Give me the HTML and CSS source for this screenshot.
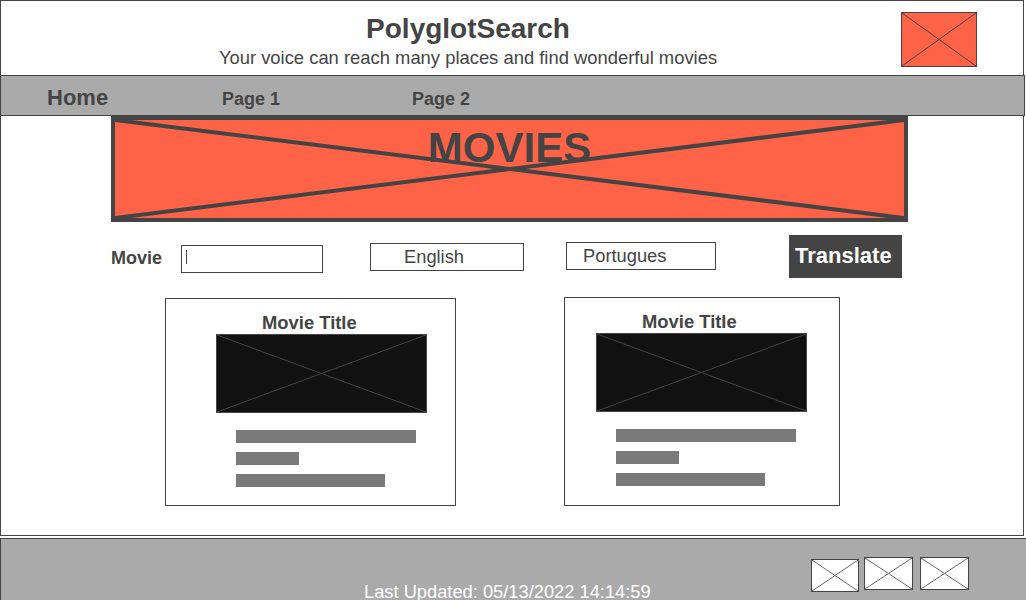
FILE: index.html
```html
<!DOCTYPE html>
<html lang="en">
<head>
<meta charset="utf-8">
<title>PolyglotSearch</title>
<link rel="stylesheet" href="styles.css">
</head>
<body>
<div class="page">
  <header class="header">
    <div class="brand">
      <h1 class="brand-title">PolyglotSearch</h1>
      <p class="brand-sub">Your voice can reach many places and find wonderful movies</p>
    </div>
    <div class="logo">
      <svg class="xsvg" viewBox="0 0 100 100" preserveAspectRatio="none"><line x1="0" y1="0" x2="100" y2="100"/><line x1="100" y1="0" x2="0" y2="100"/></svg>
    </div>
  </header>
  <nav class="nav">
    <a class="nav-home">Home</a>
    <a class="nav-link nav-p1">Page 1</a>
    <a class="nav-link">Page 2</a>
  </nav>
  <section class="banner">
    <svg class="banner-x" viewBox="0 0 100 100" preserveAspectRatio="none"><line x1="0" y1="0" x2="100" y2="100"/><line x1="100" y1="0" x2="0" y2="100"/></svg>
    <div class="banner-title">MOVIES</div>
  </section>
  <div class="form-row">
    <label class="movie-label">Movie</label>
    <div class="movie-input"><span class="caret"></span></div>
    <div class="lang lang-en">English</div>
    <div class="lang lang-pt">Portugues</div>
    <div class="translate">Translate</div>
  </div>
  <div class="cards">
    <div class="card card-a">
      <div class="card-title">Movie Title</div>
      <div class="thumb">
        <svg class="thumb-x" viewBox="0 0 100 100" preserveAspectRatio="none"><line x1="0" y1="0" x2="100" y2="100"/><line x1="100" y1="0" x2="0" y2="100"/></svg>
      </div>
      <div class="bars">
        <div class="bar" style="width:180px"></div>
        <div class="bar" style="width:63px"></div>
        <div class="bar" style="width:149px"></div>
      </div>
    </div>
    <div class="card card-b">
      <div class="card-title">Movie Title</div>
      <div class="thumb">
        <svg class="thumb-x" viewBox="0 0 100 100" preserveAspectRatio="none"><line x1="0" y1="0" x2="100" y2="100"/><line x1="100" y1="0" x2="0" y2="100"/></svg>
      </div>
      <div class="bars">
        <div class="bar" style="width:180px"></div>
        <div class="bar" style="width:63px"></div>
        <div class="bar" style="width:149px"></div>
      </div>
    </div>
  </div>
</div>
<footer class="footer">
  <div class="updated">Last Updated: 05/13/2022 14:14:59</div>
  <div class="ficon ficon-1"><svg class="ficon-x" viewBox="0 0 100 100" preserveAspectRatio="none"><line x1="0" y1="0" x2="100" y2="100"/><line x1="100" y1="0" x2="0" y2="100"/></svg></div>
  <div class="ficon ficon-2"><svg class="ficon-x" viewBox="0 0 100 100" preserveAspectRatio="none"><line x1="0" y1="0" x2="100" y2="100"/><line x1="100" y1="0" x2="0" y2="100"/></svg></div>
  <div class="ficon ficon-3"><svg class="ficon-x" viewBox="0 0 100 100" preserveAspectRatio="none"><line x1="0" y1="0" x2="100" y2="100"/><line x1="100" y1="0" x2="0" y2="100"/></svg></div>
</footer>
</body>
</html>
```

FILE: styles.css
```css
* { box-sizing: border-box; }

html, body {
  margin: 0;
  padding: 0;
  background: #ffffff;
  overflow: hidden;
}

body {
  font-family: "Liberation Sans", Arial, sans-serif;
  color: #444444;
  width: 1026px;
  height: 600px;
}

.page {
  width: 1024px;
  height: 536px;
  border: 1px solid #444444;
}

/* header */
.header {
  display: flex;
  align-items: flex-start;
  height: 74px;
}

.brand {
  margin-left: 37px;
  width: 860px;
  padding-top: 12px;
  text-align: center;
}

.brand-title {
  margin: 0;
  font-size: 28px;
  line-height: 32px;
  font-weight: bold;
}

.brand-sub {
  margin: 2px 0 0;
  font-size: 18.4px;
  line-height: 21px;
}

.logo {
  margin-left: 3px;
  margin-top: 11px;
  width: 76px;
  height: 55px;
  border: 1px solid #444444;
  background: #ff6347;
}

.xsvg, .thumb-x, .ficon-x {
  display: block;
  width: 100%;
  height: 100%;
}

.xsvg line, .thumb-x line, .ficon-x line {
  stroke: #444444;
  stroke-width: 1px;
  vector-effect: non-scaling-stroke;
}

/* nav */
.nav {
  display: flex;
  align-items: baseline;
  height: 41px;
  margin-right: -2px;
  padding-top: 10px;
  padding-left: 46px;
  background: #aaaaaa;
  border-top: 1px solid #444444;
  border-bottom: 1px solid #444444;
  border-right: 1px solid #444444;
  line-height: 24px;
  font-weight: bold;
}

.nav-home {
  width: 175px;
  font-size: 22px;
}

.nav-link {
  font-size: 18px;
}

.nav-p1 {
  width: 190px;
}

/* banner */
.banner {
  position: relative;
  margin-left: 110px;
  width: 797px;
  height: 106px;
  border: 4px solid #444444;
  background: #ff6347;
  text-align: center;
}

.banner-x {
  position: absolute;
  left: 0;
  top: 0;
  width: 100%;
  height: 100%;
}

.banner-x line {
  stroke: #444444;
  stroke-width: 4px;
  vector-effect: non-scaling-stroke;
}

.banner-title {
  position: relative;
  padding-top: 7px;
  font-size: 42px;
  line-height: 42px;
  font-weight: bold;
}

/* form row */
.form-row {
  display: flex;
  align-items: flex-start;
  margin-top: 13px;
  padding-left: 110px;
  height: 43px;
}

.movie-label {
  margin-top: 13px;
  font-size: 18px;
  line-height: 21px;
  font-weight: bold;
}

.movie-input {
  margin-left: 19px;
  margin-top: 10px;
  width: 142px;
  height: 28px;
  border: 1px solid #444444;
  padding-left: 4px;
  padding-top: 4px;
}

.caret {
  display: block;
  width: 1px;
  height: 14px;
  background: #444444;
}

.lang {
  height: 28px;
  border: 1px solid #444444;
  font-size: 18.3px;
  line-height: 26px;
}

.lang-en {
  margin-left: 47px;
  margin-top: 8px;
  width: 154px;
  padding-left: 33px;
}

.lang-pt {
  margin-left: 42px;
  margin-top: 7px;
  width: 150px;
  padding-left: 16px;
}

.translate {
  margin-left: 73px;
  width: 113px;
  height: 43px;
  padding-left: 6px;
  background: #444444;
  color: #ffffff;
  font-size: 22px;
  line-height: 41px;
  font-weight: bold;
}

/* cards */
.cards {
  display: flex;
  align-items: flex-start;
  gap: 108px;
  margin-top: 20px;
  padding-left: 164px;
}

.card {
  border: 1px solid #444444;
  padding-top: 13px;
  padding-bottom: 18px;
}

.card-a {
  width: 291px;
  padding-left: 50px;
}

.card-b {
  width: 276px;
  padding-left: 31px;
  margin-top: -1px;
  padding-bottom: 19px;
}

.card-title {
  margin-left: 46px;
  font-size: 18.4px;
  line-height: 22px;
  font-weight: bold;
}

.thumb {
  width: 211px;
  height: 79px;
  border: 1px solid #444444;
  background: #111111;
}

.bars {
  display: flex;
  flex-direction: column;
  gap: 9px;
  margin-top: 17px;
  margin-left: 20px;
}

.bar {
  height: 13px;
  background: #7a7a7a;
}

/* footer */
.footer {
  display: flex;
  align-items: flex-start;
  margin-top: 2px;
  height: 62px;
  background: #aaaaaa;
  border-top: 1px solid #444444;
  border-left: 1px solid #444444;
}

.updated {
  margin-left: 363px;
  padding-top: 42px;
  width: 447px;
  font-size: 18.3px;
  line-height: 21px;
  color: #ffffff;
  white-space: nowrap;
}

.ficon {
  height: 33px;
  background: #ffffff;
  border: 1px solid #444444;
}

.ficon-x line {
  stroke: #666666;
}

.ficon-1 {
  margin-top: 20px;
  width: 48px;
}

.ficon-2 {
  margin-left: 5px;
  margin-top: 18px;
  width: 49px;
}

.ficon-3 {
  margin-left: 7px;
  margin-top: 18px;
  width: 49px;
}
```
